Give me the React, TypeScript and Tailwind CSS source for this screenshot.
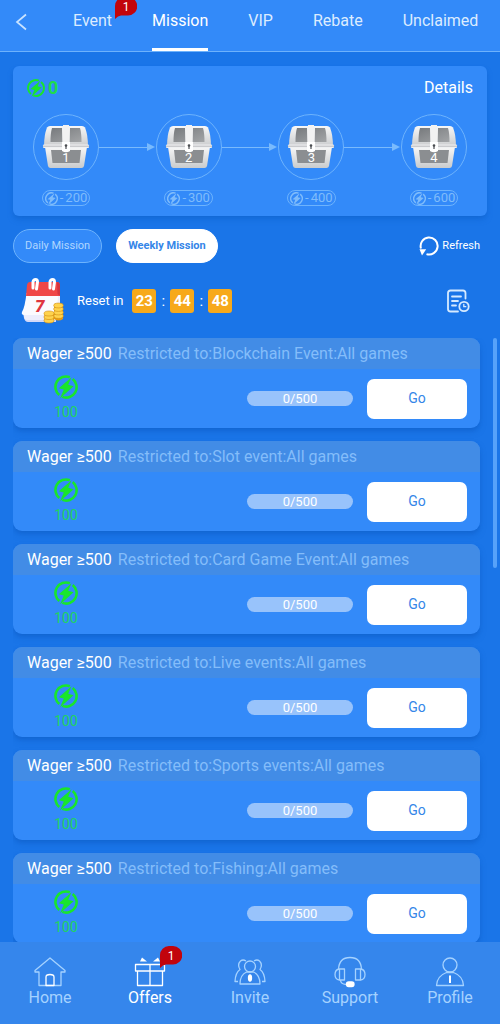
import { useState } from 'react';
import type { ReactNode } from 'react';
import clsx from 'clsx';

interface Mission {
  id: string;
  scope: string;
}

const TABS = ['Event', 'Mission', 'VIP', 'Rebate', 'Unclaimed'];

const CHESTS = [200, 300, 400, 600];

const MISSIONS: Mission[] = [
  { id: 'blockchain', scope: 'Blockchain Event' },
  { id: 'slot', scope: 'Slot event' },
  { id: 'card', scope: 'Card Game Event' },
  { id: 'live', scope: 'Live events' },
  { id: 'sports', scope: 'Sports events' },
  { id: 'fishing', scope: 'Fishing' },
];

function CoinIcon({ className }: { className?: string }) {
  return (
    <svg viewBox="0 0 24 24" className={className} fill="none" aria-hidden="true">
      <path
        d="M15.800 2.200A10.500 10.500 0 0 0 5.300 20.100M8.400 21.900A10.500 10.500 0 0 0 18.700 3.900"
        stroke="currentColor"
        strokeWidth="2.600"
      />
      <path d="M17.500 2.200 4.800 13.300l5 1.200L6 23.500 19.600 11.200l-5.400-1.400z" fill="currentColor" />
    </svg>
  );
}

function ChestIcon({ className }: { className?: string }) {
  return (
    <svg viewBox="0 0 48 44" className={className} aria-hidden="true">
      <defs>
        <linearGradient id="chest-metal" x1="0" y1="0" x2="0" y2="1">
          <stop offset="0" stopColor="#f7f7f7" />
          <stop offset="1" stopColor="#c9cbcd" />
        </linearGradient>
        <linearGradient id="chest-panel" x1="0" y1="0" x2="1" y2="1">
          <stop offset="0" stopColor="#777a7d" />
          <stop offset="1" stopColor="#a3a5a7" />
        </linearGradient>
      </defs>
      <path d="M5 2.500Q6 1 8 1h32q2 0 3 1.500Q46 10 46 22H2Q2 10 5 2.500z" fill="url(#chest-metal)" />
      <path d="M10 3h10v14H8.500Q8.500 8 10 3zM28 3h10q1.500 5 1.500 14H28z" fill="url(#chest-panel)" />
      <path d="M3 22h42l-3 19q-.5 2-2.500 2h-31Q6.500 43 6 41z" fill="url(#chest-metal)" />
      <path d="M9 25h30l-1.500 13h-27z" fill="#8b8e91" />
      <rect x="1" y="19.500" width="46" height="3.500" rx="1" fill="#eff0f1" />
      <path d="M1 21.200h46" stroke="#a9acaf" strokeWidth=".8" />
      <path d="M21 0h6v18h-6z" fill="#f2f2f2" />
      <path d="M20 17h8v9q-4 2.500-8 0z" fill="#fff" />
      <circle cx="24" cy="20.500" r="1.300" fill="#4b4e52" />
      <path d="M23.400 20.500h1.200v3.500h-1.200z" fill="#4b4e52" />
    </svg>
  );
}

function CalendarIcon({ className }: { className?: string }) {
  return (
    <svg viewBox="0 0 44 48" className={className} aria-hidden="true">
      <path d="M2 36h33v9H7q-3 0-4-4z" fill="#d3d9f8" />
      <path d="M6 16h33v24q-1 3-4 3H6q-3 0-3-4z" fill="#eceefd" />
      <path d="M5.500 16h32l-2 18q-1 4-4 4H3q-3-.5-2-3 3-5 4.500-19z" fill="#fbfbff" />
      <path d="M9 5h27q3 0 3 4v10H5L6 8q.5-3 3-3z" fill="#f04747" />
      <path d="M36 5q3 0 3 4v10l-2.500-2z" fill="#d43540" />
      <path
        d="M12 11V5q.5-2.500 2.500-2.500T16.500 5l-1 7M29 11V5q.5-2.500 2.500-2.500T33.500 5l-1 7"
        stroke="#fff"
        strokeWidth="3"
        strokeLinecap="round"
        fill="none"
      />
      <text x="14" y="34.500" fontSize="17" fontWeight="900" fontStyle="italic" fill="#df3540">
        7
      </text>
      <path d="M23.500 36v8q5 4 9.500 0v-8zM33 28v14q4.500 3 9 0V28z" fill="#e79a12" />
      <g fill="#ffd34d" stroke="#d08c10" strokeWidth=".6">
        <ellipse cx="37.500" cy="39" rx="4.800" ry="2.400" />
        <ellipse cx="37.500" cy="35.500" rx="4.800" ry="2.400" />
        <ellipse cx="37.500" cy="32" rx="4.800" ry="2.400" />
        <ellipse cx="37.500" cy="28.500" rx="4.800" ry="2.400" />
        <ellipse cx="28" cy="43.500" rx="5" ry="2.500" />
        <ellipse cx="28" cy="40" rx="5" ry="2.500" />
        <ellipse cx="28" cy="36.500" rx="5" ry="2.500" />
      </g>
    </svg>
  );
}

function RefreshIcon({ className }: { className?: string }) {
  return (
    <svg viewBox="0 0 20 20" className={className} fill="none" aria-hidden="true">
      <path d="M2 12.500A8.500 8.500 0 1 1 7.500 18.100" stroke="currentColor" strokeWidth="2" />
      <path d="M.5 13.300h6.700L3 19.500z" fill="currentColor" />
    </svg>
  );
}

function RecordIcon({ className }: { className?: string }) {
  return (
    <svg
      viewBox="0 0 24 24"
      className={className}
      fill="none"
      stroke="currentColor"
      strokeWidth="1.800"
      strokeLinecap="round"
      aria-hidden="true"
    >
      <path d="M19.500 9.500V4q0-2.500-2.500-2.500H4.500Q2 1.500 2 4v16q0 2.500 2.500 2.500H12" />
      <path d="M6 7.500h9M6 12h6M6 16.500h4" />
      <circle cx="18" cy="17.500" r="4.700" />
      <path d="M17.800 15.300v2.400h2" strokeWidth="1.300" />
    </svg>
  );
}

function NavIcon({ children }: { children: ReactNode }) {
  return (
    <svg
      viewBox="0 0 32 32"
      className="size-8"
      fill="none"
      stroke="currentColor"
      strokeWidth="1.300"
      strokeLinejoin="round"
      aria-hidden="true"
    >
      {children}
    </svg>
  );
}

const NAV_ITEMS = [
  {
    label: 'Home',
    icon: (
      <NavIcon>
        <path d="M16 2 1 14.500V16h4v13.500h22V16h4v-1.500z" />
        <path d="M12 29.500V21q0-2.500 4-2.500t4 2.500v8.500z" stroke="#fff" />
      </NavIcon>
    ),
  },
  {
    label: 'Offers',
    badge: 1,
    icon: (
      <NavIcon>
        <path d="M1.500 8.500h29V15h-29zM3.500 15h25v14.500h-25zM16 8.500v21" />
        <path d="M6 5.500 8 1.500l5 4zM26 5.500l-2-4-5 4z" fill="currentColor" stroke="none" />
      </NavIcon>
    ),
  },
  {
    label: 'Invite',
    icon: (
      <NavIcon>
        <circle cx="16" cy="10.500" r="5.500" />
        <path d="M6 28q0-9 6.500-12h7Q26 19 26 28z" />
        <path d="M12 5q-3-2-5.500 0-3.500 3.500-.5 8.500-4.500 3-5 12h3M20 5q3-2 5.500 0 3.500 3.500.5 8.500 4.500 3 5 12h-3" />
        <ellipse cx="16" cy="22" rx="1.500" ry="3" fill="#fff" stroke="#fff" />
      </NavIcon>
    ),
  },
  {
    label: 'Support',
    icon: (
      <NavIcon>
        <path d="M4.500 13.500Q5 1.500 16 1.500t11.500 12" />
        <path d="M5.500 13h5v11h-5zM21.500 13h5v11h-5z" />
        <path d="M5.500 13Q1 13.500 1 18.500T5.500 24M26.500 13q4.500.5 4.500 5.500T26.500 24M6.500 24q0 4 5.500 4.500" />
        <rect x="12.500" y="26" width="7.500" height="4.500" rx="2.200" fill="#fff" stroke="#fff" />
      </NavIcon>
    ),
  },
  {
    label: 'Profile',
    icon: (
      <NavIcon>
        <circle cx="16" cy="9" r="7" />
        <path d="M2.500 29.500Q3 20 12.500 16.500h7Q29 20 29.500 29.500z" />
        <path d="M16 19.500V27" stroke="#fff" strokeWidth="2" />
      </NavIcon>
    ),
  },
];

function Badge({ count, className }: { count: number; className?: string }) {
  return (
    <span className={clsx('absolute h-[22px] w-[22px] text-center text-[12px] leading-[20px] text-white', className)}>
      <svg viewBox="0 0 22 22" className="absolute inset-0 size-full" aria-hidden="true">
        <path d="M9 0h4a9 9 0 0 1 0 18.500H6Q3 18.500 0 22V9a9 9 0 0 1 9-9z" fill="#c2040c" />
      </svg>
      <span className="relative">{count}</span>
    </span>
  );
}

function MissionCard({ mission }: { mission: Mission }) {
  return (
    <li className="h-[90px] shrink-0 overflow-hidden rounded-[9px] bg-[#338af9] shadow-md shadow-[#0d5cc4]/50">
      <h2 className="flex h-[31px] items-center gap-[6px] bg-[#428ce6] pl-[14px] text-[16px] leading-6 whitespace-nowrap">
        <span className="text-white">Wager ≥500</span>
        <span className="text-[#84bdfa]">Restricted to:{mission.scope}:All games</span>
      </h2>
      <div className="flex h-[59px] items-center justify-between pr-[13px] pl-[41px]">
        <div className="flex flex-col items-center gap-[3px] text-[#19e62b]">
          <CoinIcon className="size-6" />
          <span className="text-[14px] leading-5 text-[#20d460]">100</span>
        </div>
        <div className="flex items-center gap-[14px]">
          <div className="flex h-[15px] w-[106px] items-center justify-center rounded-full bg-[#98c3fb] text-[13px] text-white">
            0/500
          </div>
          <button type="button" className="h-10 w-[100px] rounded-[7px] bg-white text-[14px] text-[#3586e8]">
            Go
          </button>
        </div>
      </div>
    </li>
  );
}

export default function App() {
  const [activeTab, setActiveTab] = useState('Mission');
  const [period, setPeriod] = useState('Weekly');

  return (
    <div className="flex h-screen flex-col overflow-hidden bg-[#1a75e8] font-[Roboto,sans-serif] text-white">
      {/* Top tabs */}
      <header className="flex h-[52px] shrink-0 border-b border-[#6db2fc] bg-[#338af9]">
        <button type="button" aria-label="Back" className="flex h-[43px] w-[73px] items-center pl-[15px] text-[#c9e3ff]">
          <svg viewBox="0 0 12 18" className="h-[18px] w-3" fill="none" stroke="currentColor" strokeWidth="1.700">
            <path d="M11 1.500 2 9l9 7.500" />
          </svg>
        </button>
        <nav className="flex gap-10">
          {TABS.map((tab) => (
            <button
              key={tab}
              type="button"
              onClick={() => setActiveTab(tab)}
              className={clsx(
                'relative flex h-[51px] items-start border-b-[3px] pt-[9px] text-[16px] leading-6',
                activeTab === tab ? 'border-white text-white' : 'border-transparent text-[#dcecff]'
              )}
            >
              {tab}
              {tab === 'Event' && <Badge count={1} className="-top-[3px] left-[42px]" />}
            </button>
          ))}
        </nav>
      </header>

      <main className="flex min-h-0 flex-1 flex-col gap-[13px] pt-[14px]">
        {/* Chest progress */}
        <section className="mx-[13px] shrink-0 rounded-md bg-[#338af9] py-[10px] shadow-md shadow-[#0d5cc4]/40">
          <div className="flex items-center justify-between px-[14px] text-[16px] leading-6">
            <span className="flex items-center gap-[3px] font-bold text-[#19e62b]">
              <CoinIcon className="size-[18px]" />
              <span className="text-[18px] text-[#20dc4c]">0</span>
            </span>
            <button type="button">Details</button>
          </div>
          <ol className="mt-[14px] flex px-5">
            {CHESTS.map((cost, index) => (
              <li key={cost} className={clsx('flex', index > 0 && 'flex-1')}>
                {index > 0 && (
                  <div className="mr-px flex h-[66px] flex-1 items-center text-[#79bafd]">
                    <span className="h-px flex-1 bg-current" />
                    <svg viewBox="0 0 8 8" className="size-2" aria-hidden="true">
                      <path d="M0 0l8 4-8 4z" fill="currentColor" />
                    </svg>
                  </div>
                )}
                <div className="flex w-[66px] flex-col items-center gap-[10px]">
                  <div className="relative flex size-[66px] items-center justify-center rounded-full border border-[#6db3fd]">
                    <ChestIcon className="h-[44px] w-[48px]" />
                    <span className="absolute inset-x-0 top-[35px] text-center text-[13px] leading-4">{index + 1}</span>
                  </div>
                  <div className="flex h-4 items-center gap-[2px] rounded-full border border-[#6db3fd] px-[2px] text-[13px] leading-4 text-[#7fbcfb]">
                    <CoinIcon className="size-[13px]" />
                    <span>-</span>
                    <span>{cost}</span>
                  </div>
                </div>
              </li>
            ))}
          </ol>
        </section>

        {/* Period switch */}
        <div className="flex h-[34px] shrink-0 items-center gap-[14px] pr-5 pl-[13px] text-[11px]">
          {['Daily', 'Weekly'].map((item) => (
            <button
              key={item}
              type="button"
              onClick={() => setPeriod(item)}
              className={clsx(
                'h-full rounded-full border px-[11px]',
                period === item
                  ? 'border-white bg-white font-bold text-[#3586e8]'
                  : 'border-[#6db3fd] bg-[#338af9] text-[#b0d6ff]'
              )}
            >
              {item} Mission
            </button>
          ))}
          <button type="button" className="ml-auto flex items-center gap-[3px]">
            <RefreshIcon className="size-5" />
            Refresh
          </button>
        </div>

        {/* Countdown */}
        <div className="flex h-[49px] shrink-0 items-center pr-[30px] pl-[21px]">
          <CalendarIcon className="h-12 w-11" />
          <span className="ml-3 text-[13px]">Reset in</span>
          <div className="ml-[9px] flex items-center text-[15px] leading-6">
            {['23', '44', '48'].map((part, index) => (
              <div key={part} className="flex items-center">
                {index > 0 && <span className="w-[14px] text-center">:</span>}
                <span className="size-6 rounded-[3px] bg-[#f7a91b] text-center font-bold">{part}</span>
              </div>
            ))}
          </div>
          <button type="button" aria-label="Record" className="ml-auto text-[#d5eaff]">
            <RecordIcon className="size-6" />
          </button>
        </div>

        {/* Mission list */}
        <div className="flex min-h-0 flex-1 justify-between pr-[3px] pl-[13px]">
          <ul className="flex flex-1 flex-col gap-[13px] overflow-hidden pr-[13px]">
            {MISSIONS.map((mission) => (
              <MissionCard key={mission.id} mission={mission} />
            ))}
          </ul>
          <div className="h-[230px] w-1 rounded-full bg-[#56a2fa]" />
        </div>
      </main>

      {/* Bottom navigation */}
      <nav className="flex h-[82px] shrink-0 bg-[#3586ec]">
        {NAV_ITEMS.map((item) => (
          <a
            key={item.label}
            href={`#${item.label.toLowerCase()}`}
            className={clsx(
              'relative flex flex-1 flex-col items-center pt-[14px] text-[16px] leading-6',
              item.badge ? 'text-white' : 'text-[#a5d2ff]'
            )}
          >
            {item.icon}
            <span className="-mt-[2px]">{item.label}</span>
            {item.badge && <Badge count={item.badge} className="top-1 left-[60px]" />}
          </a>
        ))}
      </nav>
    </div>
  );
}
